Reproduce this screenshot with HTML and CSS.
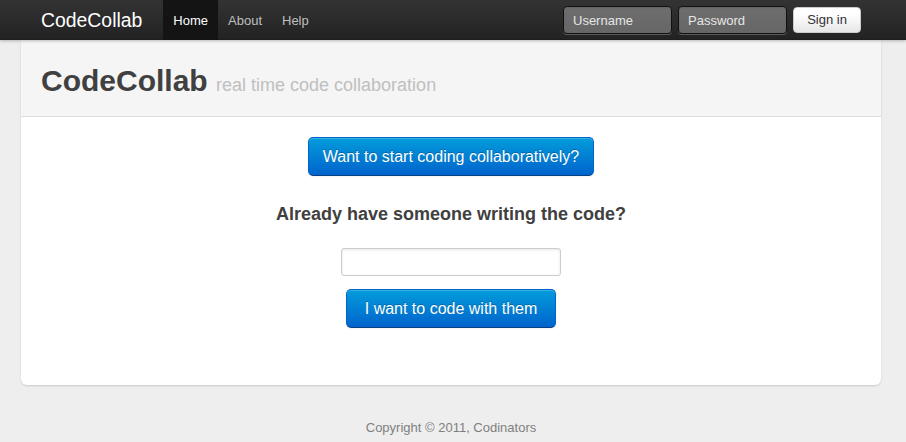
FILE: index.html
```html
<!DOCTYPE html>
<html>
<head>
<meta charset="utf-8">
<link rel="stylesheet" href="styles.css">
<title>CodeCollab</title>
</head>
<body>
<div class="topbar">
  <div class="container topbar-inner">
    <a class="brand" href="#">CodeCollab</a>
    <ul class="nav">
      <li class="active"><a href="#">Home</a></li>
      <li><a href="#">About</a></li>
      <li><a href="#">Help</a></li>
    </ul>
    <form class="login">
      <input class="dark-input" type="text" placeholder="Username">
      <input class="dark-input" type="password" placeholder="Password">
      <button class="btn-signin" type="button">Sign in</button>
    </form>
  </div>
</div>
<div class="page">
  <div class="content">
    <div class="page-header">
      <h1>CodeCollab <small>real time code collaboration</small></h1>
    </div>
    <div class="main">
      <button class="btn-primary btn-start" type="button">Want to start coding collaboratively?</button>
      <h3 class="question">Already have someone writing the code?</h3>
      <input class="code-input" type="text">
      <button class="btn-primary btn-join" type="button">I want to code with them</button>
    </div>
  </div>
  <footer class="footer">
    <p>Copyright © 2011, Codinators</p>
  </footer>
</div>
</body>
</html>
```
FILE: styles.css
```css
* { box-sizing: border-box; }
html, body { margin: 0; padding: 0; }
body {
  background: #eeeeee;
  font-family: "Liberation Sans", Arial, sans-serif;
  font-size: 13px;
  line-height: 18px;
  color: #404040;
}
.container {
  width: 820px;
  margin-left: 41px;
}
.topbar {
  height: 40px;
  background: linear-gradient(to bottom, #333333, #222222);
  box-shadow: 0 1px 3px rgba(0,0,0,0.25), inset 0 -1px 0 rgba(0,0,0,0.1);
  position: relative;
  z-index: 2;
}
.topbar-inner {
  display: flex;
  align-items: center;
  height: 40px;
}
.brand {
  display: block;
  margin-left: -20px;
  padding: 11px 21px 0 20px;
  font-size: 19.4px;
  line-height: 1;
  color: #ffffff;
  text-decoration: none;
  height: 40px;
}
.nav {
  display: flex;
  list-style: none;
  margin: 0;
  padding: 0;
  height: 40px;
}
.nav li a {
  display: block;
  padding: 0 10px;
  height: 40px;
  line-height: 42px;
  color: #bfbfbf;
  text-decoration: none;
  font-size: 13px;
}
.nav li.active a {
  background: #141414;
  color: #ffffff;
}
.login {
  margin-left: auto;
  display: flex;
  align-items: center;
  gap: 6px;
}
.dark-input {
  width: 109px;
  height: 28px;
  padding: 4px 9px;
  font-family: "Liberation Sans", Arial, sans-serif;
  font-size: 13px;
  color: #ffffff;
  background: rgba(255,255,255,0.3);
  border: 1px solid #111111;
  border-radius: 4px;
  box-shadow: inset 0 1px 2px rgba(0,0,0,0.1), 0 1px 0 rgba(255,255,255,0.25);
  outline: none;
}
.dark-input::placeholder { color: #e6e6e6; }
.btn-signin {
  width: 68px;
  height: 26px;
  font-family: "Liberation Sans", Arial, sans-serif;
  font-size: 13px;
  color: #333333;
  background: linear-gradient(to bottom, #ffffff, #ffffff 25%, #e6e6e6);
  border: 1px solid #cccccc;
  border-radius: 4px;
  padding: 0;
  line-height: 24px;
}
.page {
  padding-left: 21px;
  width: 881px;
}
.content {
  background: #ffffff;
  border-radius: 0 0 6px 6px;
  box-shadow: 0 1px 2px rgba(0,0,0,0.15);
  padding-bottom: 57px;
}
.page-header {
  background: #f5f5f5;
  border-bottom: 1px solid #dddddd;
  padding: 23px 20px 13px;
}
.page-header h1 {
  margin: 0;
  font-size: 30px;
  line-height: 36px;
  font-weight: bold;
  color: #404040;
}
.page-header h1 small {
  font-size: 18px;
  font-weight: normal;
  color: #bfbfbf;
}
.main {
  display: flex;
  flex-direction: column;
  align-items: center;
  padding-top: 20px;
}
.btn-primary {
  font-family: "Liberation Sans", Arial, sans-serif;
  font-size: 16px;
  color: #ffffff;
  background: linear-gradient(to bottom, #049cdb, #0064cd);
  border: 1px solid #0064cd;
  border-bottom-color: #003f81;
  border-radius: 5px;
  text-shadow: 0 -1px 0 rgba(0,0,0,0.25);
  box-shadow: inset 0 1px 0 rgba(255,255,255,0.2), 0 1px 2px rgba(0,0,0,0.05);
  padding: 0 14px;
  height: 39px;
  line-height: 37px;
}
.question {
  margin: 26px 0 0;
  font-size: 18px;
  line-height: 24px;
  font-weight: bold;
  color: #404040;
}
.code-input {
  margin-top: 22px;
  width: 220px;
  height: 28px;
  border: 1px solid #cccccc;
  border-radius: 3px;
  box-shadow: inset 0 1px 3px rgba(0,0,0,0.1);
  outline: none;
  font-family: "Liberation Sans", Arial, sans-serif;
  font-size: 13px;
  padding: 4px 6px;
}
.btn-join {
  margin-top: 13px;
  width: 210px;
  padding: 0;
}
.footer {
  text-align: center;
  padding-top: 24px;
}
.footer p {
  margin: 0;
  font-size: 13px;
  color: #808080;
  line-height: 38px;
}
```
